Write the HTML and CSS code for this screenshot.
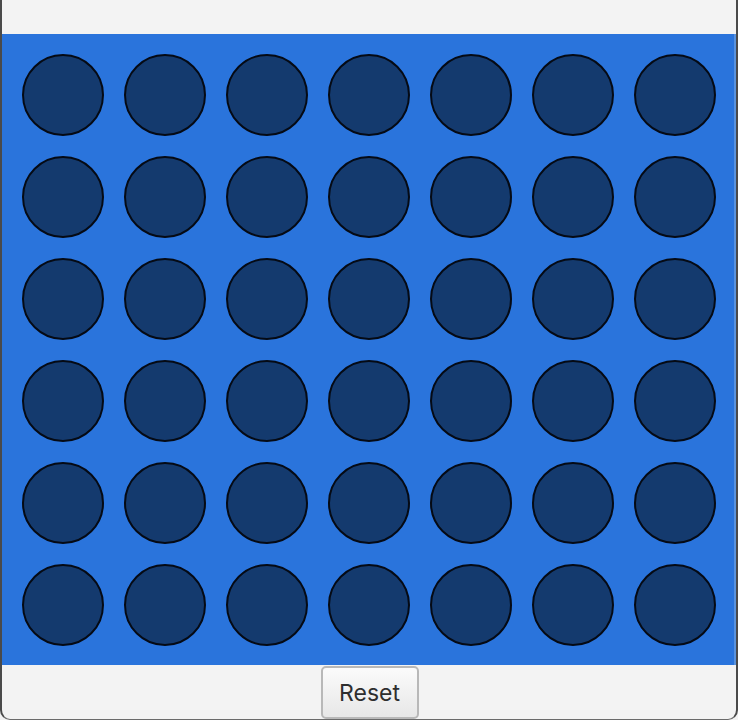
FILE: index.html
```html
<!DOCTYPE html>
<html>
<head>
<meta charset="utf-8">
<link rel="stylesheet" href="styles.css">
</head>
<body>
<div class="window">
  <div class="topbar"></div>
  <div class="board">
    <div class="cell"></div><div class="cell"></div><div class="cell"></div><div class="cell"></div><div class="cell"></div><div class="cell"></div><div class="cell"></div>
    <div class="cell"></div><div class="cell"></div><div class="cell"></div><div class="cell"></div><div class="cell"></div><div class="cell"></div><div class="cell"></div>
    <div class="cell"></div><div class="cell"></div><div class="cell"></div><div class="cell"></div><div class="cell"></div><div class="cell"></div><div class="cell"></div>
    <div class="cell"></div><div class="cell"></div><div class="cell"></div><div class="cell"></div><div class="cell"></div><div class="cell"></div><div class="cell"></div>
    <div class="cell"></div><div class="cell"></div><div class="cell"></div><div class="cell"></div><div class="cell"></div><div class="cell"></div><div class="cell"></div>
    <div class="cell"></div><div class="cell"></div><div class="cell"></div><div class="cell"></div><div class="cell"></div><div class="cell"></div><div class="cell"></div>
  </div>
  <div class="controls">
    <button class="reset">Reset</button>
  </div>
</div>
</body>
</html>
```
FILE: styles.css
```css
html, body {
  margin: 0;
  padding: 0;
  background: #f3f3f3;
}
.window {
  box-sizing: border-box;
  width: 738px;
  height: 720px;
  background: #f3f3f3;
  border-left: 2px solid #4a4a4a;
  border-right: 2px solid #4a4a4a;
  border-bottom: 1px solid #6a6a6a;
  border-radius: 0 0 10px 10px;
  display: flex;
  flex-direction: column;
  overflow: hidden;
}
.topbar {
  height: 34px;
  flex: none;
}
.board {
  flex: none;
  height: 631px;
  box-sizing: border-box;
  background: #2a74dc;
  border-right: 2px solid #5a93de;
  padding: 20px 0 0 20px;
  display: grid;
  grid-template-columns: repeat(7, 82px);
  grid-template-rows: repeat(6, 82px);
  column-gap: 20px;
  row-gap: 20px;
}
.cell {
  box-sizing: border-box;
  width: 82px;
  height: 82px;
  border-radius: 50%;
  background: #143a6e;
  border: 2px solid #050a14;
}
.controls {
  display: flex;
  justify-content: center;
  padding-top: 1px;
  padding-left: 1px;
}
.reset {
  box-sizing: border-box;
  width: 98px;
  height: 53px;
  font-family: "Inter", "Noto Sans", sans-serif;
  font-size: 23px;
  color: #2e2e2e;
  background: linear-gradient(#fbfbfb, #e7e7e7);
  border: 2px solid #b8b8b8;
  border-radius: 5px;
  padding: 0;
}
```
